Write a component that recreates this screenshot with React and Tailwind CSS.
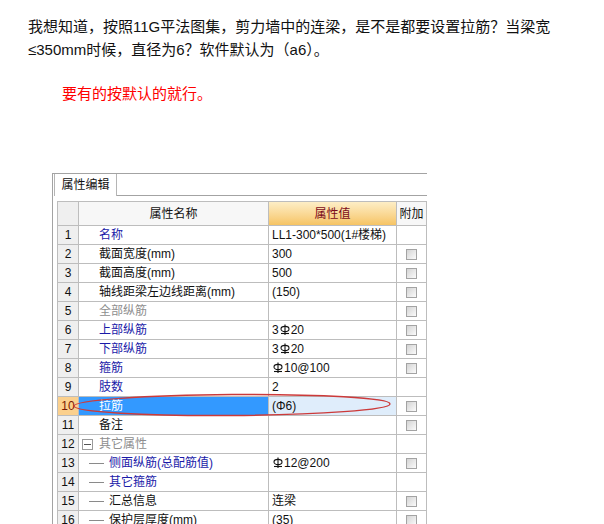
import React from "react";

const FONT = "font-['Liberation_Sans','Noto_Sans_CJK_SC',sans-serif]";

function Rebar() {
    // HRB400 rebar symbol
    return (
        <svg width="10" height="12" viewBox="0 0 10 12" className="inline-block align-[-1px] mx-[1px]">
            <ellipse cx="5" cy="5" rx="4" ry="2.6" fill="none" stroke="#111" strokeWidth="1.1" />
            <line x1="5" y1="0.5" x2="5" y2="11" stroke="#111" strokeWidth="1.1" />
            <line x1="1" y1="9.5" x2="9" y2="9.5" stroke="#111" strokeWidth="1.1" />
        </svg>
    );
}

function Check() {
    return (
        <span className="block w-[11px] h-[11px] border border-[#a3a3a3] bg-linear-to-br from-[#d4d4d4] to-[#fbfbfb]" />
    );
}

const rows = [
    { n: 1, name: "名称", c: "blue", val: "LL1-300*500(1#楼梯)", chk: false },
    { n: 2, name: "截面宽度(mm)", c: "black", val: "300", chk: true },
    { n: 3, name: "截面高度(mm)", c: "black", val: "500", chk: true },
    { n: 4, name: "轴线距梁左边线距离(mm)", c: "black", val: "(150)", chk: true },
    { n: 5, name: "全部纵筋", c: "gray", val: "", chk: true },
    { n: 6, name: "上部纵筋", c: "blue", val: <>3<Rebar />20</>, chk: true },
    { n: 7, name: "下部纵筋", c: "blue", val: <>3<Rebar />20</>, chk: true },
    { n: 8, name: "箍筋", c: "blue", val: <><Rebar />10@100</>, chk: true },
    { n: 9, name: "肢数", c: "blue", val: "2", chk: false },
    { n: 10, name: "拉筋", c: "sel", val: "(Φ6)", chk: true },
    { n: 11, name: "备注", c: "black", val: "", chk: true },
    { n: 12, name: "其它属性", c: "gray", val: "", chk: false, group: true },
    { n: 13, name: "侧面纵筋(总配筋值)", c: "blue", val: <><Rebar />12@200</>, chk: true, child: true },
    { n: 14, name: "其它箍筋", c: "blue", val: "", chk: false, child: true },
    { n: 15, name: "汇总信息", c: "black", val: "连梁", chk: true, child: true },
    { n: 16, name: "保护层厚度(mm)", c: "black", val: "(35)", chk: true, child: true },
];

const nameColor = {
    blue: "text-[#1a1aa8]",
    black: "text-[#111]",
    gray: "text-[#8e8e8e]",
    sel: "text-white",
};

function Row({ r }) {
    const sel = r.c === "sel";
    return (
        <div className="flex h-[19px]">
            <div className={`w-[21px] shrink-0 border-r border-b border-[#bdbdbd] flex items-center justify-center ${sel ? "bg-[#fbd08d] text-[#7a1a00]" : "bg-[#efefef] text-[#111]"}`}>
                {r.n}
            </div>
            <div className={`w-[190px] shrink-0 border-r border-b border-[#bdbdbd] flex items-center ${sel ? "bg-[#3399ff]" : "bg-white"} ${nameColor[r.c]}`}>
                {r.group && (
                    <span className="ml-[3px] mr-[6px] w-[11px] h-[11px] border border-[#9a9a9a] bg-white flex items-center justify-center">
                        <span className="block w-[7px] h-px bg-[#555]" />
                    </span>
                )}
                {r.child && <span className="ml-[10px] mr-[5px] w-[15px] h-px bg-[#8a8a8a]" />}
                <span className={r.group || r.child ? "" : "ml-[20px]"}>{r.name}</span>
            </div>
            <div className={`w-[128px] shrink-0 border-r border-b border-[#bdbdbd] flex items-center pl-[3px] text-[#111] ${sel ? "bg-[#dfedfb]" : "bg-white"}`}>
                {r.val}
            </div>
            <div className="w-[30px] shrink-0 border-r border-b border-[#bdbdbd] flex items-center justify-center bg-white">
                {r.chk && <Check />}
            </div>
        </div>
    );
}

export default function App() {
    return (
        <div className={`relative w-[604px] h-[524px] overflow-hidden bg-white ${FONT}`}>
            <div className="pl-[28px] pt-[15px] text-[15px] leading-[23px] text-[#111] whitespace-nowrap">
                <div>我想知道，按照11G平法图集，剪力墙中的连梁，是不是都要设置拉筋？当梁宽</div>
                <div>≤350mm时候，直径为6？软件默认为（a6）。</div>
            </div>
            <div className="mt-[21px] pl-[62px] text-[15px] leading-[23px] text-[#ff0000]">
                要有的按默认的就行。
            </div>

            <div className="ml-[52px] mt-[68px] w-[375px] border-l border-t border-[#a3a3a3] text-[12px]">
                <div className="flex h-[22px]">
                    <div className="ml-px w-[63px] border-l border-r border-[#b5b5b5] bg-white flex items-center justify-center text-[12px] text-[#111]">
                        属性编辑
                    </div>
                    <div className="flex-1 border-b border-[#a3a3a3]" />
                </div>
                <div className="pl-[4px] pt-[5px]">
                    <div className="w-[370px] border-l border-t border-[#bdbdbd]">
                        <div className="flex h-[24px]">
                            <div className="w-[21px] shrink-0 border-r border-b border-[#bdbdbd] bg-[#efefef]" />
                            <div className="w-[190px] shrink-0 border-r border-b border-[#bdbdbd] bg-[#f7f7f7] flex items-center justify-center text-[#111]">
                                属性名称
                            </div>
                            <div className="w-[128px] shrink-0 border-r border-b border-[#bdbdbd] bg-linear-to-b from-[#fdeec6] to-[#f6c463] flex items-center justify-center text-[#7b0a1a]">
                                属性值
                            </div>
                            <div className="w-[30px] shrink-0 border-r border-b border-[#bdbdbd] bg-[#f7f7f7] flex items-center justify-center text-[#111]">
                                附加
                            </div>
                        </div>
                        {rows.map(r => (
                            <Row key={r.n} r={r} />
                        ))}
                    </div>
                </div>
            </div>

            <svg className="absolute left-[70px] top-[391px]" width="324" height="28" viewBox="0 0 324 28">
                <ellipse cx="162" cy="14" rx="158" ry="10.5" fill="none" stroke="#cc3a3a" strokeWidth="1.4" transform="rotate(-0.4 162 14)" />
            </svg>
        </div>
    );
}
